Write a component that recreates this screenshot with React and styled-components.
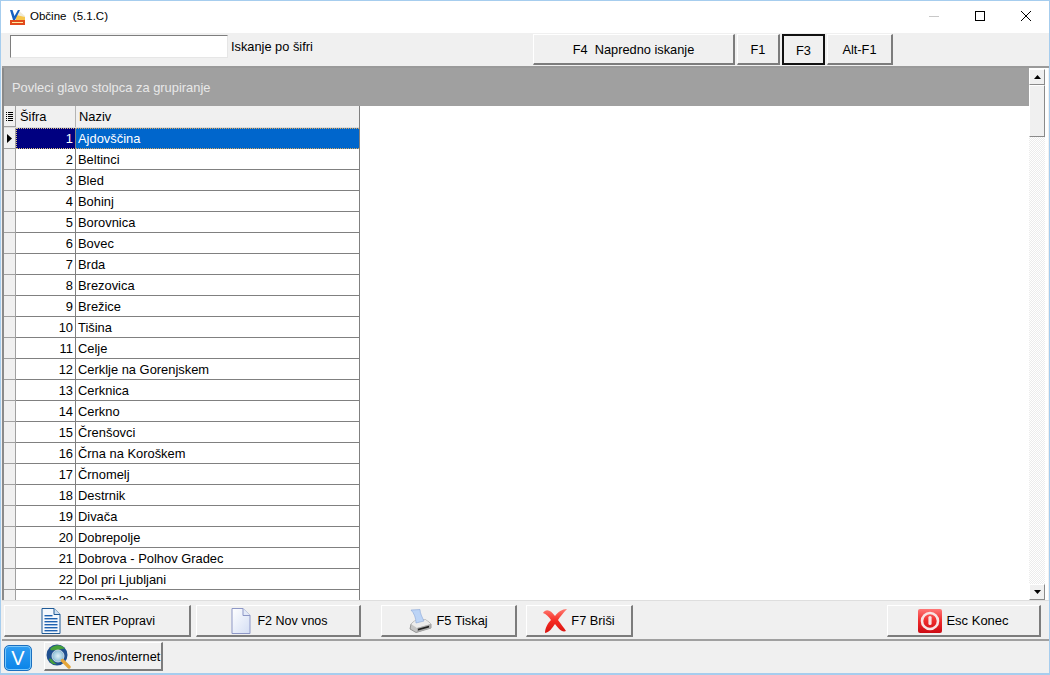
import React from "react";
import styled, { createGlobalStyle } from "styled-components";

const Global = createGlobalStyle`
  html, body { margin: 0; padding: 0; background: #f0f0f0; }
  body { font-family: "Liberation Sans", Arial, sans-serif; font-size: 13px; color: #000; }
  * { box-sizing: border-box; }
`;

const Window = styled.div`
  width: 1050px; height: 675px; display: flex; flex-direction: column;
  border: 1px solid #a6cdee; border-bottom-width: 2px; background: #f0f0f0; overflow: hidden;
`;
const TitleBar = styled.div`
  height: 32px; flex: none; background: #fff; display: flex; align-items: center; padding-left: 8px;
`;
const TitleText = styled.span`
  margin-left: 4px; font-size: 11.5px; white-space: pre; position: relative; top: -1px;
`;
const WinButtons = styled.div`
  margin-left: auto; display: flex; align-items: center; height: 100%; position: relative; top: -1px;
`;
const WinButton = styled.div`
  width: 46px; height: 100%; display: flex; align-items: center; justify-content: center;
`;
const Toolbar = styled.div`
  height: 35px; flex: none; display: flex; align-items: flex-start; padding: 1px 0 0 8px;
  border-bottom: 2px solid #9a9a9a; margin-left: 1px;
`;
const SearchInput = styled.div`
  width: 218px; height: 23px; margin-top: 1px; background: #fff;
  border: 1px solid; border-color: #7e7e7e #e6e6e6 #e6e6e6 #7e7e7e;
`;
const SearchLabel = styled.span`
  margin: 5px 0 0 3px; font-size: 12.8px; width: 302px; flex: none;
`;
const Raised = styled.div`
  height: ${p => p.$h || 31}px; width: ${p => p.$w}px; flex: none;
  margin-right: ${p => p.$mr || 0}px; margin-left: ${p => p.$ml || 0}px;
  padding-left: ${p => p.$pl || 0}px;
  display: flex; align-items: center; justify-content: center; gap: ${p => p.$gap ?? 4}px;
  background: #f0f0f0; font-size: ${p => p.$fs || 12.8}px; white-space: pre; color: #000;
  border: 1px solid; border-color: #fff #7c7c7c #7c7c7c #fff;
  border-width: 1px 2px 2px 1px;
`;
const FocusButton = styled(Raised)`
  border: 2px solid #111; padding-top: 2px;
`;
const Main = styled.div`
  flex: 1; min-height: 0; display: flex; background: #fff; margin: 0 1px 0 1px; padding-right: 3px; border-left: 2px solid #8a8a8a;
`;
const GridArea = styled.div`
  flex: 1; min-width: 0; display: flex; flex-direction: column; overflow: hidden;
`;
const GroupBar = styled.div`
  height: 38px; flex: none; background: #a0a0a0; color: #e8e8e8; display: flex; align-items: center; padding-left: 8px; font-size: 12.9px;
`;
const Table = styled.div`
  width: 356px; flex: 1; min-height: 0; overflow: hidden; border-right: 1px solid #808080;
`;
const HeaderRow = styled.div`
  display: grid; grid-template-columns: 12px 60px 1fr; height: 22px; background: #f0f0f0; border-bottom: 1px solid #dcdcdc;
`;
const HeaderCell = styled.div`
  display: flex; align-items: center; padding-left: ${p => p.$pl || 3}px; border-right: 1px solid #b4b4b4; font-size: 12.9px;
  &:last-child { border-right: 0; }
`;
const Indicator = styled.div`
  background: #f0f0f0; border-right: 1px solid #a0a0a0; border-bottom: 1px solid #a0a0a0;
  display: flex; align-items: center; justify-content: center;
`;
const Row = styled.div`
  display: grid; grid-template-columns: 12px 60px 1fr; height: 21px;
`;
const CodeCell = styled.div`
  text-align: right; padding: 3px 2px 0 0; font-size: 12.9px; border-right: 1px solid #808080; border-bottom: 1px solid #808080;
  background: ${p => p.$sel ? "#000080" : "#fff"}; color: ${p => p.$sel ? "#fff" : "#000"};
  ${p => p.$sel && "border: 1px dotted #d8c080; border-right: 1px solid #808080; padding-top: 2px;"}
`;
const NameCell = styled.div`
  padding: 3px 0 0 2px; font-size: 12.9px; border-bottom: 1px solid #808080; white-space: pre;
  background: ${p => p.$sel ? "#0066cc" : "#fff"}; color: ${p => p.$sel ? "#fff" : "#000"};
  ${p => p.$sel && "border-top: 1px dotted #d8a860; border-bottom: 1px dotted #d8a860; padding-top: 2px;"}
`;
const ScrollBar = styled.div`
  width: 16px; flex: none; margin-top: 1px; display: flex; flex-direction: column;
  background-color: #f8f8f8;
  background-image: repeating-conic-gradient(#ececec 0 25%, #fff 0 50%);
  background-size: 2px 2px;
`;
const ScrollBtn = styled.div`
  height: ${p => p.$h}px; flex: none; background: #f0f0f0; display: flex; align-items: center; justify-content: center;
  border: 1px solid; border-color: #fff #8a8a8a #8a8a8a #fff;
`;
const Spacer = styled.div` flex: 1; `;
const ActionBar = styled.div`
  height: 41px; flex: none; margin-left: 1px; border-top: 1px solid #dedede; border-bottom: 2px solid #a0a0a0; padding: 4px 0 0 2px; display: flex; align-items: flex-start;
`;
const StatusBar = styled.div`
  flex: none; height: 32px; margin-left: 1px; display: flex; align-items: flex-start; padding: 1px 0 0 2px;
`;
const VButton = styled.div`
  width: 28px; height: 26px; margin-top: 3px; border-radius: 5px; background: linear-gradient(#2f9df2, #0a84e8); border: 1px solid #1b6fbf;
  box-shadow: inset 0 0 0 1px #7cc8fa;
  color: #fff; font-size: 20px; display: flex; align-items: center; justify-content: center;
`;
const Svg = styled.svg` flex: none; display: block; `;

const names = ["Ajdovščina","Beltinci","Bled","Bohinj","Borovnica","Bovec","Brda","Brezovica","Brežice","Tišina","Celje","Cerklje na Gorenjskem","Cerknica","Cerkno","Črenšovci","Črna na Koroškem","Črnomelj","Destrnik","Divača","Dobrepolje","Dobrova - Polhov Gradec","Dol pri Ljubljani","Domžale"];

const AppIcon = () => (
  <Svg width="17" height="17" viewBox="0 0 17 17">
    <path d="M9 1 L16 7 V12 H6 Z" fill="#f0ead6" />
    <path d="M7 6 L16 8 V11 H7Z" fill="#f7c64a" />
    <path d="M1 1 H3.5 L5.5 7 L9 1 H11 L6 11 H4 Z" fill="#1660c0" />
    <rect x="1" y="11" width="15" height="5" fill="#e24a1c" />
    <rect x="3" y="13" width="11" height="1" fill="#ffe9a0" />
  </Svg>
);
const DocLinesIcon = () => (
  <Svg width="20" height="26" viewBox="0 0 20 26">
    <path d="M1 .5 H13 L19 6.5 V25.5 H1 Z" fill="#f4f8fd" stroke="#1f5a96" />
    <path d="M13 .5 V6.5 H19" fill="#cfe0f2" stroke="#1f5a96" />
    {[7,10,13,16,19,22].map(y => <rect key={y} x="3.5" y={y} width={y === 7 ? 8 : 13} height="1.4" fill="#1f62b0" />)}
  </Svg>
);
const DocIcon = () => (
  <Svg width="20" height="26" viewBox="0 0 20 26">
    <defs><linearGradient id="dg" x1="0" y1="0" x2="1" y2="1"><stop offset="0" stopColor="#fff" /><stop offset="1" stopColor="#d4def4" /></linearGradient></defs>
    <path d="M1 .5 H12 L19 7.5 V25.5 H1 Z" fill="url(#dg)" stroke="#8d97c6" />
    <path d="M12 .5 V7.5 H19" fill="#e4eaf8" stroke="#8d97c6" />
  </Svg>
);
const PrinterIcon = () => (
  <Svg width="23" height="24" viewBox="0 0 23 24">
    <path d="M2 15 L7 11 H17 L22 15 V19 L7 23.5 L1 20 Z" fill="#c4c4c4" stroke="#7a7a7a" strokeWidth=".7" />
    <path d="M2 15 L8 19 L22 15 L17 11 H7 Z" fill="#ececec" />
    <path d="M8 19 V23.5 L22 19 V15 Z" fill="#a8a8a8" />
    <path d="M9 19.8 L20 16.8 V18.4 L9 21.4 Z" fill="#222" />
    <path d="M2 1 L11 .5 C11 4 13 8 15 12 L7 14 C7 9 5 4 2 1 Z" fill="#bcd4f6" stroke="#8aa6d6" strokeWidth=".6" />
  </Svg>
);
const CrossIcon = () => (
  <Svg width="24" height="25" viewBox="0 0 24 25">
    <defs><linearGradient id="xg" x1="0" y1="0" x2="0" y2="1"><stop offset="0" stopColor="#ff7a70" /><stop offset=".5" stopColor="#f52a22" /><stop offset="1" stopColor="#d81410" /></linearGradient></defs>
    <path d="M0 5 C3 0 8 2 12 8 C15 4 19 1 24 1 C20 5 17 9 15 12 C18 16 21 20 23 23 C19 25 15 20 12 16 C9 20 7 24 2 25 C2 20 5 15 8 12 C6 9 3 6 0 5 Z" fill="url(#xg)" />
  </Svg>
);
const PowerIcon = () => (
  <Svg width="24" height="24" viewBox="0 0 24 24">
    <defs><linearGradient id="pg" x1="0" y1="0" x2="0" y2="1"><stop offset="0" stopColor="#f77" /><stop offset=".5" stopColor="#ee2a2a" /><stop offset="1" stopColor="#cc0a14" /></linearGradient></defs>
    <rect width="24" height="24" rx="2" fill="url(#pg)" />
    <circle cx="12" cy="12" r="8" fill="none" stroke="#f8e4e4" strokeWidth="2.6" />
    <rect x="10.4" y="7" width="3.2" height="9" rx="1.5" fill="#f8e4e4" />
  </Svg>
);
const GlobeIcon = () => (
  <Svg width="25" height="25" viewBox="0 0 25 25">
    <defs><radialGradient id="gg" cx=".5" cy=".5" r=".55"><stop offset="0" stopColor="#dff0f6" /><stop offset=".7" stopColor="#9cc8dc" /><stop offset="1" stopColor="#5c94b8" /></radialGradient></defs>
    <circle cx="11" cy="11" r="10.5" fill="#1f4f8f" />
    <path d="M4 5 C8 0 16 0 19 5 C15 4 13 7 9 6 C7 6 5 7 4 5 Z" fill="#46a03a" />
    <path d="M3 15 C6 13 7 19 11 20 C7 21 4 19 3 15 Z" fill="#46a03a" />
    <circle cx="12" cy="12" r="6" fill="url(#gg)" stroke="#e8eef2" strokeWidth=".8" />
    <path d="M16.5 16.5 L23 23" stroke="#e4a53a" strokeWidth="3.4" strokeLinecap="round" />
  </Svg>
);
const ColumnsIcon = () => (
  <Svg width="7" height="9" viewBox="0 0 7 9">
    {[0,2,4,6,8].map(y => <g key={y}><rect x="0" y={y} width="1" height="1" fill="#000" /><rect x="2" y={y} width="5" height="1" fill="#000" /></g>)}
  </Svg>
);

export default function App() {
  return (
    <>
      <Global />
      <Window>
        <TitleBar>
          <AppIcon />
          <TitleText>Občine  (5.1.C)</TitleText>
          <WinButtons>
            <WinButton>
              <Svg width="10" height="10" viewBox="0 0 10 10"><rect y="5" width="10" height="1" fill="#c8c8c8" /></Svg>
            </WinButton>
            <WinButton>
              <Svg width="10" height="10" viewBox="0 0 10 10"><rect x=".5" y=".5" width="9" height="9" fill="none" stroke="#000" /></Svg>
            </WinButton>
            <WinButton>
              <Svg width="10" height="10" viewBox="0 0 10 10"><path d="M0 0 L10 10 M10 0 L0 10" stroke="#000" strokeWidth="1" /></Svg>
            </WinButton>
          </WinButtons>
        </TitleBar>
        <Toolbar>
          <SearchInput />
          <SearchLabel>Iskanje po šifri</SearchLabel>
          <Raised $w={202} $mr={2}>F4  Napredno iskanje</Raised>
          <Raised $w={43} $mr={2}>F1</Raised>
          <FocusButton $w={43} $mr={2}>F3</FocusButton>
          <Raised $w={66}>Alt-F1</Raised>
        </Toolbar>
        <Main>
          <GridArea>
            <GroupBar>Povleci glavo stolpca za grupiranje</GroupBar>
            <Table>
              <HeaderRow>
                <Indicator><ColumnsIcon /></Indicator>
                <HeaderCell $pl={4}>Šifra</HeaderCell>
                <HeaderCell>Naziv</HeaderCell>
              </HeaderRow>
              {names.map((n, i) => (
                <Row key={n}>
                  <Indicator>
                    {i === 0 && <Svg width="5" height="9" viewBox="0 0 5 9"><path d="M0 0 L5 4.5 L0 9 Z" fill="#000" /></Svg>}
                  </Indicator>
                  <CodeCell $sel={i === 0}>{i + 1}</CodeCell>
                  <NameCell $sel={i === 0}>{n}</NameCell>
                </Row>
              ))}
            </Table>
          </GridArea>
          <ScrollBar>
            <ScrollBtn $h={16}><Svg width="7" height="4" viewBox="0 0 7 4"><path d="M3.5 0 L7 4 H0 Z" fill="#000" /></Svg></ScrollBtn>
            <ScrollBtn $h={52} />
            <Spacer />
            <ScrollBtn $h={16}><Svg width="7" height="4" viewBox="0 0 7 4"><path d="M0 0 H7 L3.5 4 Z" fill="#000" /></Svg></ScrollBtn>
          </ScrollBar>
        </Main>
        <ActionBar>
          <Raised $w={187} $h={32} $mr={5} $gap={6} $fs={12.5} $pl={2}><DocLinesIcon />ENTER Popravi</Raised>
          <Raised $w={165} $h={32} $mr={20} $gap={6} $fs={12.5} $pl={3}><DocIcon />F2 Nov vnos</Raised>
          <Raised $w={136} $h={32} $mr={9} $gap={4}><PrinterIcon />F5 Tiskaj</Raised>
          <Raised $w={107} $h={32} $mr={254} $gap={4}><CrossIcon />F7 Briši</Raised>
          <Raised $w={154} $h={32} $gap={4} $fs={13}><PowerIcon />Esc Konec</Raised>
        </ActionBar>
        <StatusBar>
          <VButton>V</VButton>
          <Raised $w={119} $h={29} $ml={12} $gap={3}><GlobeIcon />Prenos/internet</Raised>
        </StatusBar>
      </Window>
    </>
  );
}
